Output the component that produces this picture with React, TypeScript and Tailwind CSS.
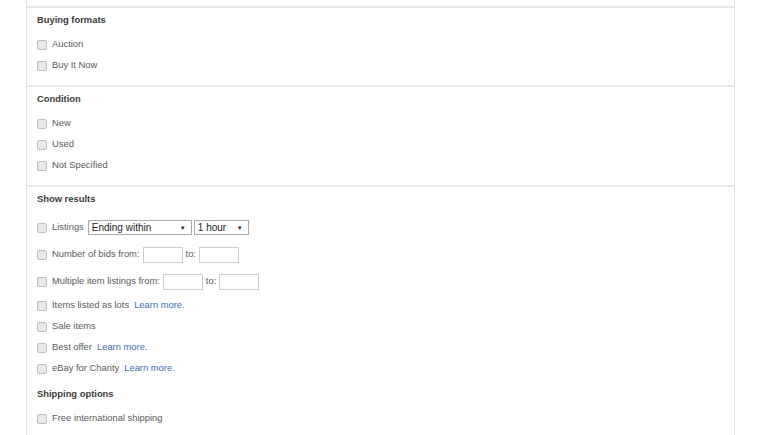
import React from "react";

const font = { fontFamily: '"Liberation Sans", Arial, sans-serif' };

function Box() {
  return (
    <input
      type="checkbox"
      className="appearance-none shrink-0 w-[10px] h-[10px] rounded-[2px] border border-[#bdbdbd] bg-[#e9e9e9] m-0"
    />
  );
}

function Learn() {
  return <a className="ml-[5px] text-[#3d6db5] cursor-pointer">Learn more.</a>;
}

function Row({ children, tall }: { children: React.ReactNode; tall?: boolean }) {
  return (
    <div className={`flex items-center gap-[5px] ${tall ? "h-[27px]" : "h-[21px]"}`}>
      <Box />
      <div className="flex items-center text-[#5a5a5a]">{children}</div>
    </div>
  );
}

function Heading({ children }: { children: React.ReactNode }) {
  return <div className="h-[14px] flex items-center font-bold text-[#3a3a3a]">{children}</div>;
}

function Field() {
  return <span className="inline-block w-[40px] h-[16px] border border-[#cccccc] bg-white" />;
}

function Select({ label, w }: { label: string; w: string }) {
  return (
    <span className={`flex items-center justify-between h-[15px] border border-[#a9a9a9] bg-white pl-[3px] pr-[5px] text-[10px] text-[#222] ${w}`}>
      <span>{label}</span>
      <span className="text-[6px] leading-none">▼</span>
    </span>
  );
}

export default function App() {
  return (
    <div className="w-[758px] h-[435px] bg-white overflow-hidden text-[9.4px]" style={font}>
      <div className="ml-[26px] w-[709px] h-full border-x border-[#e4e4e4] pt-[6px]">
        {/* Buying formats */}
        <div className="border-t-2 border-[#e8e8e8] pl-[10px] pt-[5px] pb-[9px]">
          <Heading>Buying formats</Heading>
          <div className="mt-[7px]">
            <Row>Auction</Row>
            <Row>Buy It Now</Row>
          </div>
        </div>

        {/* Condition */}
        <div className="border-t-2 border-[#e8e8e8] pl-[10px] pt-[5px] pb-[9px]">
          <Heading>Condition</Heading>
          <div className="mt-[7px]">
            <Row>New</Row>
            <Row>Used</Row>
            <Row>Not Specified</Row>
          </div>
        </div>

        {/* Show results */}
        <div className="border-t-2 border-[#e8e8e8] pl-[10px] pt-[5px]">
          <Heading>Show results</Heading>
          <div className="mt-[8px]">
            <Row tall>
              <span className="mr-[4px]">Listings</span>
              <Select label="Ending within" w="w-[104px]" />
              <span className="w-[2px]" />
              <Select label="1 hour" w="w-[55px]" />
            </Row>
            <Row tall>
              <span className="mr-[3px]">Number of bids from:</span>
              <Field />
              <span className="mx-[3px]">to:</span>
              <Field />
            </Row>
            <Row tall>
              <span className="mr-[3px]">Multiple item listings from:</span>
              <Field />
              <span className="mx-[3px]">to:</span>
              <Field />
            </Row>
            <Row>
              Items listed as lots <Learn />
            </Row>
            <Row>Sale items</Row>
            <Row>
              Best offer <Learn />
            </Row>
            <Row>
              eBay for Charity <Learn />
            </Row>
          </div>
          <div className="mt-[8px]">
            <Heading>Shipping options</Heading>
          </div>
          <div className="mt-[7px]">
            <Row>Free international shipping</Row>
          </div>
        </div>
      </div>
    </div>
  );
}
